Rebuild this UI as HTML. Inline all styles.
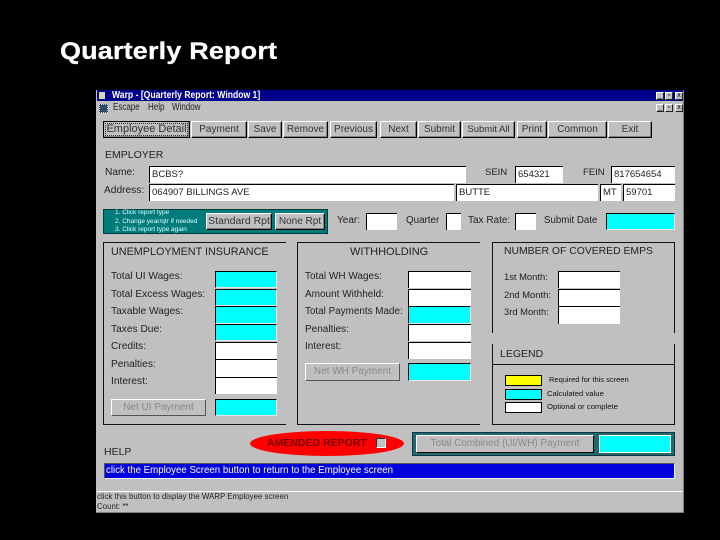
<!DOCTYPE html>
<html><head><meta charset="utf-8"><style>
html,body{margin:0;padding:0;background:#000;width:720px;height:540px;overflow:hidden}
div{position:absolute;box-sizing:border-box}
#h{left:60px;top:37px;color:#fff;font:bold 24px/30px "Liberation Sans",sans-serif;white-space:nowrap;letter-spacing:.2px;transform:scaleX(1.12);transform-origin:left top;-webkit-text-stroke:.3px #fff}
#w{left:96px;top:90px;width:588px;height:423px;background:#c0c0c0;border-right:1px solid #808080;border-bottom:1px solid #808080;font:10.2px/14px "Liberation Sans",sans-serif;color:#111}
#w div{white-space:nowrap}
#in{left:-96px;top:-90px;width:720px;height:540px;filter:blur(.3px)}
.t{color:#222}
.n{transform:scaleX(.8);transform-origin:left top;font-size:10px}
.b{background:#c0c0c0;border:1px solid;border-color:#fff #000 #000 #fff;text-align:center;box-shadow:inset -1px -1px 0 #808080;line-height:15px;font-size:10px;color:#333}
.f{background:#fff;border-top:1px solid #000;border-left:1px solid #000;font-size:9.5px;line-height:15px;padding-left:2px;color:#222}
.c{background:#0ff;border-top:1px solid #000;border-left:1px solid #000;border-right:1px solid #e8e8e8;border-bottom:1px solid #e8e8e8}
.g{border:1px solid #111}
.d{border:1px solid;border-color:#fff #555 #555 #fff;background:#c0c0c0;color:#888;text-align:center;font-size:10px;line-height:15px}
.s{border:1px solid #000}
.l{font-size:7.7px;line-height:12px}
.m{width:8px;height:8px;background:#c0c0c0;border:1px solid;border-color:#fff #222 #222 #fff;font-size:7px;line-height:6px;text-align:center;color:#000}
</style></head><body>
<div id="h">Quarterly Report</div>
<div id="w"><div id="in">
<div style="left:97px;top:90px;width:586px;height:11px;background:#00008b"></div>
<div style="left:99px;top:92px;width:6px;height:7px;background:#d8d8b0"></div>
<div style="left:112px;top:90px;color:#fff;font:bold 10px/11px 'Liberation Sans',sans-serif;transform:scaleX(.86);transform-origin:left top">Warp - [Quarterly Report: Window 1]</div>
<div class="m" style="left:656px;top:92px">_</div><div class="m" style="left:665px;top:92px">▫</div><div class="m" style="left:675px;top:92px">x</div>
<div style="left:99px;top:104px;width:9px;height:9px;background:#2a4a6a;border:1px dotted #ddd"></div>
<div class="t n" style="left:113px;top:101px">Escape</div>
<div class="t n" style="left:148px;top:101px">Help</div>
<div class="t n" style="left:172px;top:101px">Window</div>
<div class="m" style="left:656px;top:104px">_</div><div class="m" style="left:665px;top:104px">▫</div><div class="m" style="left:675px;top:104px">x</div>

<div class="b" style="left:103px;top:121px;width:87px;height:17px;border:1px solid #000;outline:1px dotted #333;outline-offset:-3px;font-size:11px">Employee Detail</div>
<div class="b" style="left:191px;top:121px;width:56px;height:17px">Payment</div>
<div class="b" style="left:248px;top:121px;width:34px;height:17px">Save</div>
<div class="b" style="left:283px;top:121px;width:45px;height:17px">Remove</div>
<div class="b" style="left:330px;top:121px;width:47px;height:17px">Previous</div>
<div class="b" style="left:380px;top:121px;width:37px;height:17px">Next</div>
<div class="b" style="left:418px;top:121px;width:43px;height:17px">Submit</div>
<div class="b" style="left:462px;top:121px;width:53px;height:17px;font-size:9.5px">Submit All</div>
<div class="b" style="left:517px;top:121px;width:30px;height:17px">Print</div>
<div class="b" style="left:548px;top:121px;width:59px;height:17px">Common</div>
<div class="b" style="left:608px;top:121px;width:44px;height:17px">Exit</div>

<div class="t" style="left:105px;top:148px;font-size:10.5px">EMPLOYER</div>
<div class="t" style="left:105px;top:166px">Name:</div>
<div class="t" style="left:104px;top:184px">Address:</div>
<div class="f" style="left:149px;top:166px;width:317px;height:17px">BCBS?</div>
<div class="f" style="left:149px;top:184px;width:305px;height:17px">064907 BILLINGS AVE</div>
<div class="f" style="left:456px;top:184px;width:142px;height:17px">BUTTE</div>
<div class="f" style="left:600px;top:184px;width:21px;height:17px">MT</div>
<div class="f" style="left:623px;top:184px;width:52px;height:17px">59701</div>
<div class="t" style="left:485px;top:166px;font-size:9.5px">SEIN</div>
<div class="f" style="left:515px;top:166px;width:48px;height:17px">654321</div>
<div class="t" style="left:583px;top:166px;font-size:9.5px">FEIN</div>
<div class="f" style="left:611px;top:166px;width:64px;height:17px">817654654</div>

<div style="left:103px;top:209px;width:225px;height:25px;background:#007b7b;border:1px solid #003c3c"></div>
<div style="left:115px;top:209px;color:#dff;font-size:6.5px;line-height:8.5px">1. Click report type<br>2. Change year/qtr if needed<br>3. Click report type again</div>
<div class="b" style="left:206px;top:213px;width:66px;height:17px;font-size:10.5px">Standard Rpt</div>
<div class="b" style="left:275px;top:213px;width:50px;height:17px">None Rpt</div>
<div class="t" style="left:337px;top:214px;font-size:10px">Year:</div>
<div class="f" style="left:366px;top:213px;width:31px;height:17px"></div>
<div class="t" style="left:406px;top:214px;font-size:9.8px">Quarter</div>
<div class="f" style="left:446px;top:213px;width:15px;height:17px"></div>
<div class="t" style="left:468px;top:214px;font-size:10px">Tax Rate:</div>
<div class="f" style="left:515px;top:213px;width:21px;height:17px"></div>
<div class="t" style="left:544px;top:214px;font-size:9.7px">Submit Date</div>
<div class="c" style="left:606px;top:213px;width:69px;height:17px"></div>

<div class="g" style="left:103px;top:242px;width:183px;height:183px;border-right:none"></div>
<div class="g" style="left:297px;top:242px;width:183px;height:183px;border-right:none"></div>
<div class="t" style="left:111px;top:245px;font-size:10.8px">UNEMPLOYMENT INSURANCE</div>
<div class="t" style="left:111px;top:270px">Total UI Wages:</div>
<div class="t" style="left:111px;top:288px">Total Excess Wages:</div>
<div class="t" style="left:111px;top:305px">Taxable Wages:</div>
<div class="t" style="left:111px;top:323px">Taxes Due:</div>
<div class="t" style="left:111px;top:340px">Credits:</div>
<div class="t" style="left:111px;top:358px">Penalties:</div>
<div class="t" style="left:111px;top:375px">Interest:</div>
<div class="c" style="left:215px;top:271px;width:62px;height:17px"></div>
<div class="c" style="left:215px;top:289px;width:62px;height:17px"></div>
<div class="c" style="left:215px;top:306px;width:62px;height:18px"></div>
<div class="c" style="left:215px;top:324px;width:62px;height:17px"></div>
<div class="f" style="left:215px;top:342px;width:62px;height:17px"></div>
<div class="f" style="left:215px;top:359px;width:62px;height:18px"></div>
<div class="f" style="left:215px;top:377px;width:62px;height:17px"></div>
<div class="d" style="left:111px;top:399px;width:95px;height:17px">Net UI Payment</div>
<div class="c" style="left:215px;top:399px;width:62px;height:17px"></div>

<div class="t" style="left:350px;top:245px;font-size:11px">WITHHOLDING</div>
<div class="t" style="left:305px;top:270px;font-size:10px">Total WH Wages:</div>
<div class="t" style="left:305px;top:288px;font-size:10px">Amount Withheld:</div>
<div class="t" style="left:305px;top:305px;font-size:9.9px">Total Payments Made:</div>
<div class="t" style="left:305px;top:323px;font-size:10px">Penalties:</div>
<div class="t" style="left:305px;top:340px;font-size:10px">Interest:</div>
<div class="f" style="left:408px;top:271px;width:63px;height:17px"></div>
<div class="f" style="left:408px;top:289px;width:63px;height:17px"></div>
<div class="c" style="left:408px;top:306px;width:63px;height:18px"></div>
<div class="f" style="left:408px;top:324px;width:63px;height:17px"></div>
<div class="f" style="left:408px;top:342px;width:63px;height:17px"></div>
<div class="d" style="left:305px;top:363px;width:95px;height:18px">Net WH Payment</div>
<div class="c" style="left:408px;top:363px;width:63px;height:18px"></div>

<div class="g" style="left:492px;top:242px;width:183px;height:91px;border-bottom:none"></div>
<div class="t" style="left:504px;top:245px;font-size:10.4px">NUMBER OF COVERED EMPS</div>
<div class="t" style="left:504px;top:270px;font-size:9.4px">1st Month:</div>
<div class="t" style="left:504px;top:288px;font-size:9.4px">2nd Month:</div>
<div class="t" style="left:504px;top:305px;font-size:9.4px">3rd Month:</div>
<div class="f" style="left:558px;top:271px;width:62px;height:17px"></div>
<div class="f" style="left:558px;top:289px;width:62px;height:17px"></div>
<div class="f" style="left:558px;top:306px;width:62px;height:18px"></div>

<div class="g" style="left:492px;top:344px;width:183px;height:81px;border-top:none"></div>
<div style="left:492px;top:364px;width:183px;height:1px;background:#111"></div>
<div class="t" style="left:500px;top:347px;font-size:10.5px">LEGEND</div>
<div class="s" style="left:505px;top:375px;width:37px;height:11px;background:#ff0"></div>
<div class="s" style="left:505px;top:389px;width:37px;height:11px;background:#0ff"></div>
<div class="s" style="left:505px;top:402px;width:37px;height:11px;background:#fff"></div>
<div class="l" style="left:549px;top:374px;font-size:7.5px">Required for this screen</div>
<div class="l" style="left:547px;top:388px">Calculated value</div>
<div class="l" style="left:547px;top:401px">Optional or complete</div>

<div style="left:250px;top:431px;width:154px;height:25px;border-radius:50%;background:#f00"></div>
<div style="left:267px;top:436px;color:#700;font:bold 10.5px/14px 'Liberation Sans',sans-serif">AMENDED REPORT</div>
<div style="left:376px;top:438px;width:10px;height:10px;background:#c0c0c0;border:1px solid;border-color:#333 #fff #fff #333"></div>

<div style="left:412px;top:432px;width:263px;height:24px;background:#1f6a6a;border:1px solid #134"></div>
<div class="d" style="left:416px;top:435px;width:178px;height:18px;border-color:#fff #000 #000 #fff;line-height:16px;font-size:9.9px">Total Combined (UI/WH) Payment</div>
<div class="c" style="left:599px;top:435px;width:72px;height:18px;border-color:#fff"></div>

<div class="t" style="left:104px;top:445px;font-size:10.5px">HELP</div>
<div style="left:104px;top:463px;width:571px;height:16px;background:#00d;border:1px solid;border-color:#555 #eee #eee #555;color:#fff;font-size:9.7px;line-height:14px;padding-left:1px">click the Employee Screen button to return to the Employee screen</div>
<div style="left:97px;top:491px;width:586px;height:1px;background:#fff"></div>
<div class="t" style="left:97px;top:492px;font-size:7.9px;line-height:10px">click this button to display the WARP Employee screen<br>Count: **</div>
</div></div>
</body></html>
